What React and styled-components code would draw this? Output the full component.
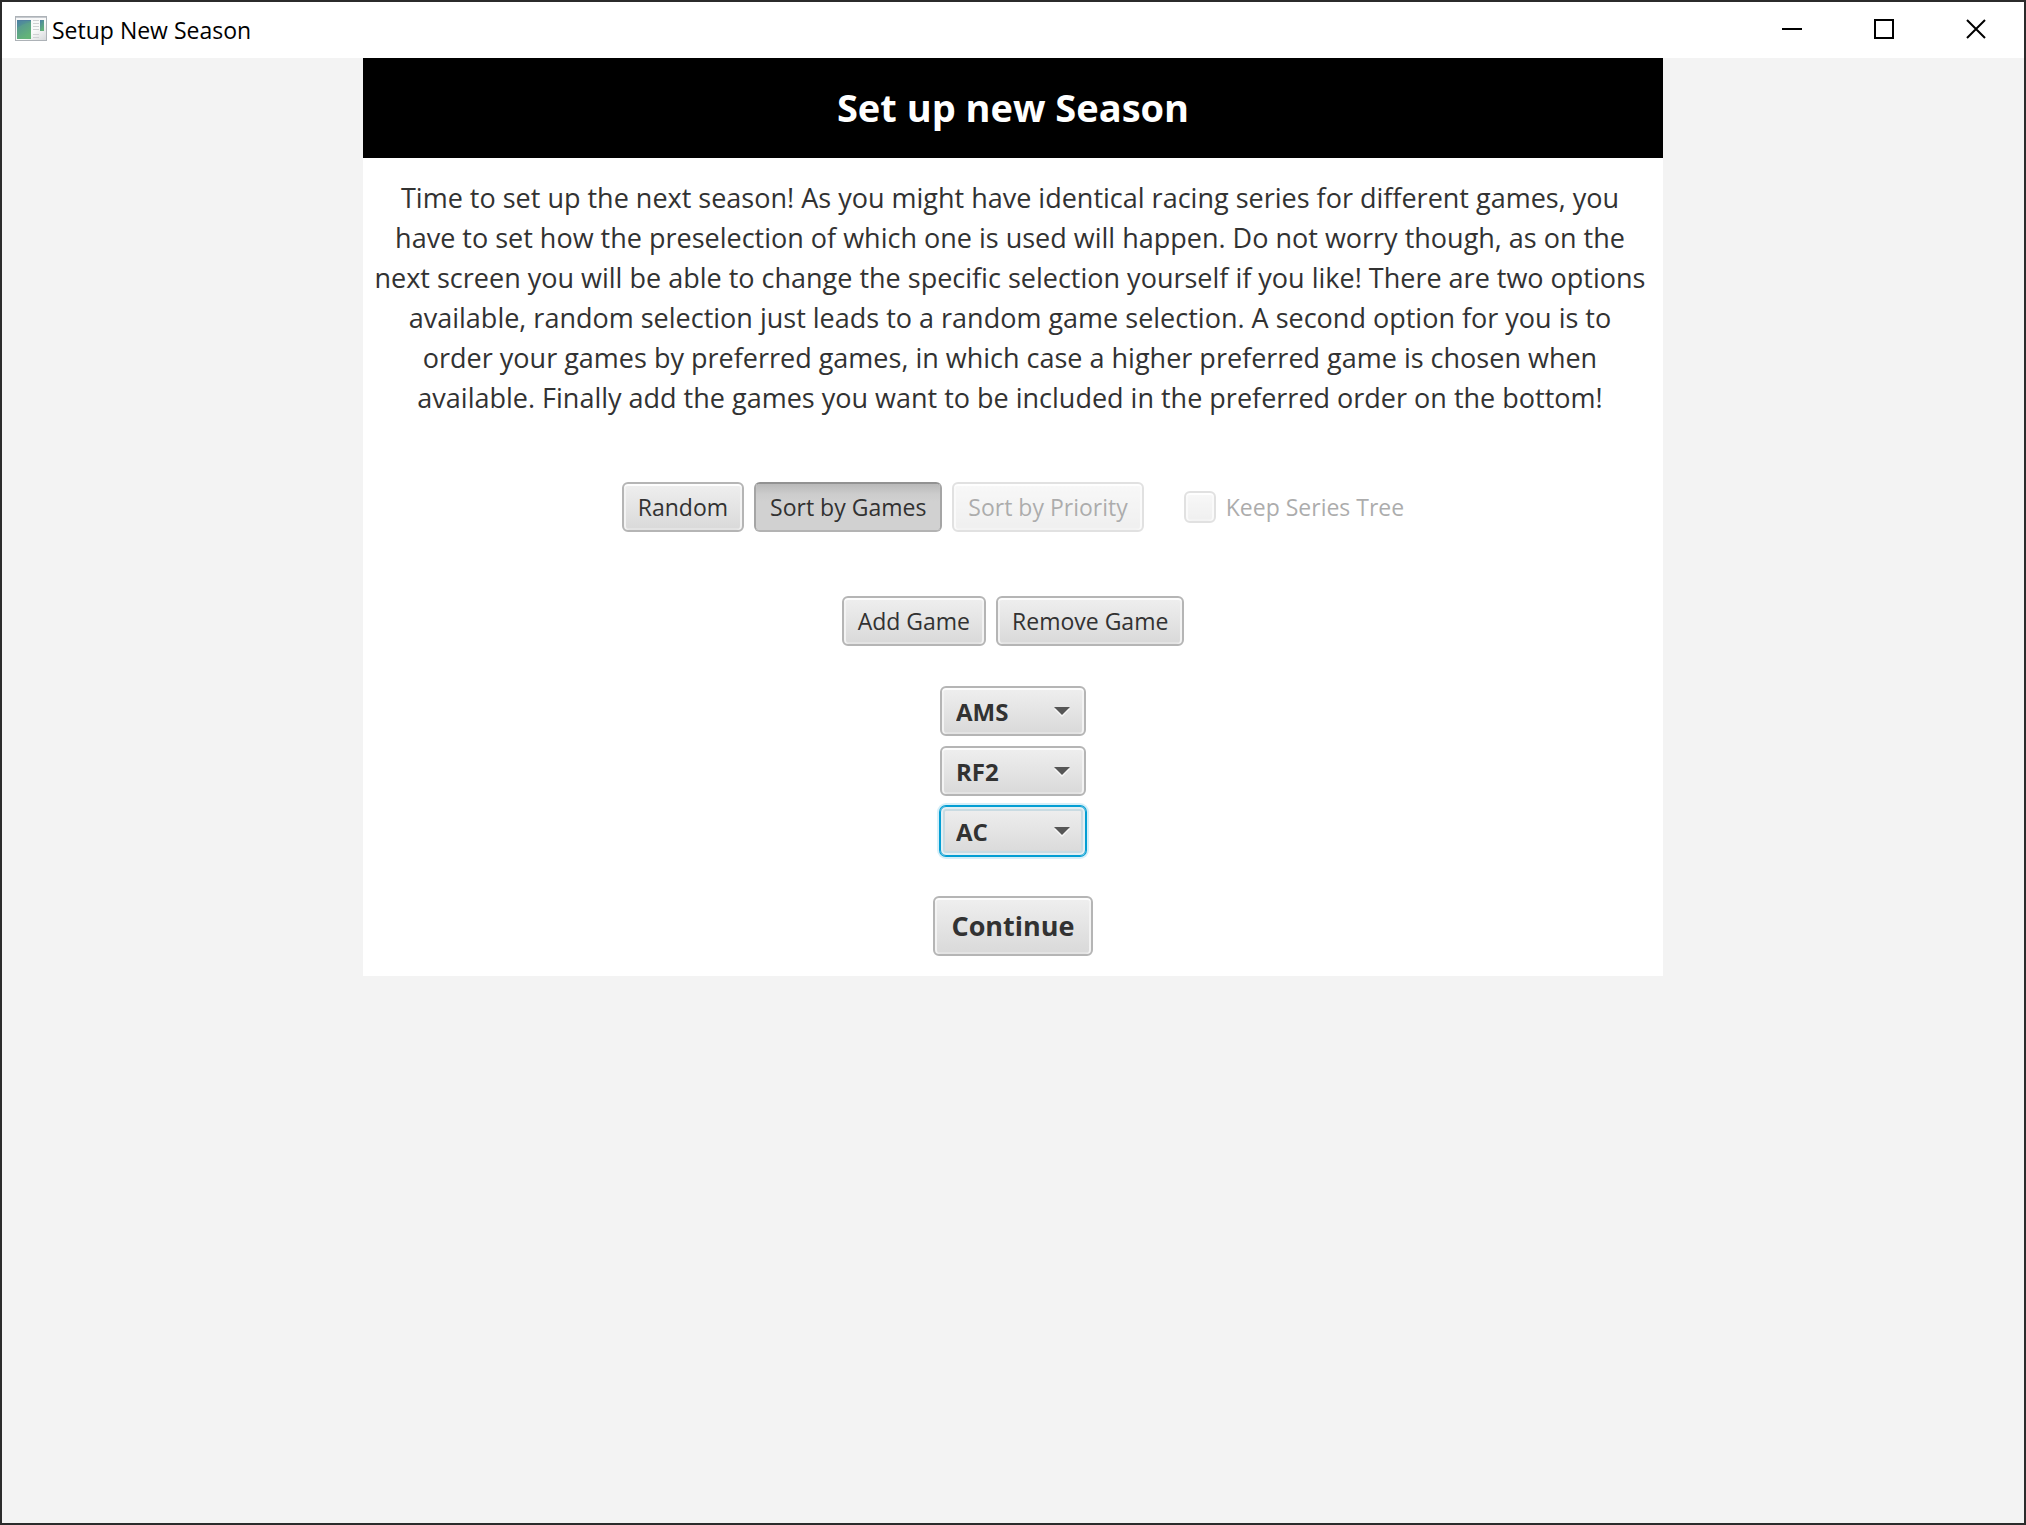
import React, { useState } from "react";
import styled, { createGlobalStyle, css } from "styled-components";

const GlobalStyle = createGlobalStyle`
  *, *::before, *::after { box-sizing: border-box; }
  body { margin: 0; }
  body, button, select, input { font-family: "Open Sans", "Noto Sans", sans-serif; }
`;

const Window = styled.div`
  display: flex;
  flex-direction: column;
  min-height: 100vh;
  border: 2px solid #2b2b2b;
  background: #f3f3f3;
  color: #323232;
`;

const TitleBar = styled.header`
  display: flex;
  align-items: center;
  justify-content: space-between;
  height: 56px;
  padding: 0 2px 0 13px;
  background: #fff;
  color: #000;
`;

const Caption = styled.div`
  display: flex;
  align-items: center;
  gap: 5px;
  font-size: 23px;
  line-height: 32px;
`;

const WindowControls = styled.div`
  display: flex;
`;

const ControlButton = styled.button`
  display: flex;
  align-items: center;
  justify-content: center;
  width: 92px;
  height: 56px;
  padding: 0;
  border: 0;
  background: transparent;
  color: #000;
`;

const Panel = styled.main`
  display: flex;
  flex-direction: column;
  align-items: center;
  align-self: center;
  width: 100%;
  max-width: 1300px;
  padding-bottom: 20px;
  background: #fff;
`;

const Heading = styled.h1`
  align-self: stretch;
  margin: 0;
  padding: 20px 20px 22px;
  background: #000;
  color: #fff;
  font-size: 38px;
  font-weight: 700;
  line-height: 58px;
  text-align: center;
`;

const Intro = styled.p`
  align-self: stretch;
  margin: 0;
  padding: 20px 16px 0 10px;
  font-size: 27px;
  line-height: 40px;
  text-align: center;
`;

const Row = styled.div`
  display: flex;
  align-items: center;
  gap: 10px;
  margin-top: 64px;
`;

const raised = css`
  border: 2px solid #b5b5b5;
  border-radius: 6px;
  background: linear-gradient(#efefef, #d9d9d9) padding-box;
  box-shadow: inset 0 2px #fdfdfd, inset 2px 0 #f3f3f3, inset -2px 0 #f3f3f3, inset 0 -2px #e3e3e3;
  color: #323232;
`;

const pressed = css`
  border-color: #929292 #a5a5a5 #b3b3b3;
  background: linear-gradient(#b9b9b9, #cccccc 10px, #d1d1d1 18px) padding-box;
  box-shadow: none;
`;

const Button = styled.button`
  ${raised}
  height: ${(p) => (p.$large ? 60 : 50)}px;
  padding: 0 ${(p) => (p.$large ? 16 : 14)}px;
  font-size: ${(p) => (p.$large ? 27 : 23)}px;
  font-weight: ${(p) => (p.$large ? 700 : 400)};
  line-height: 32px;
  ${(p) => p.$pressed && pressed}
  &:disabled { opacity: 0.4; }
`;

const CheckLabel = styled.label`
  display: flex;
  align-items: center;
  gap: 10px;
  margin-left: 30px;
  font-size: 23px;
  line-height: 32px;
  opacity: 0.4;
`;

const CheckBox = styled.input`
  ${raised}
  appearance: none;
  width: 32px;
  height: 32px;
  margin: 0;
`;

const GameList = styled.div`
  display: flex;
  flex-direction: column;
  gap: 10px;
  margin: 40px 0;
`;

const Picker = styled.div`
  display: grid;
  align-items: center;
  width: 146px;
  height: 50px;

  & > * { grid-area: 1 / 1; }
  & > svg { justify-self: end; margin-right: 16px; overflow: visible; pointer-events: none; }
`;

const Select = styled.select`
  ${raised}
  appearance: none;
  width: 100%;
  height: 50px;
  padding: 0 40px 0 14px;
  font-size: 24px;
  font-weight: 700;
  outline: none;
  ${(p) =>
    p.$active &&
    css`
      border-width: 1px;
      border-color: #039ed3;
      padding-left: 15px;
      box-shadow: 0 0 0 1px #039ed3, 0 0 0 3px #d6eff8, inset 0 0 0 2px #e3eff3, inset 0 0 0 4px #c9dbe2;
    `}
`;

function AppIcon() {
  return (
    <svg width="32" height="28" viewBox="0 0 32 28" aria-hidden="true">
      <defs>
        <linearGradient id="frame" x1="0" y1="0" x2="1" y2="1">
          <stop offset="0" stopColor="#f6f7f8" />
          <stop offset="0.6" stopColor="#fafafa" />
          <stop offset="1" stopColor="#d5d7d9" />
        </linearGradient>
        <linearGradient id="pane" x1="0" y1="0" x2="0.5" y2="1">
          <stop offset="0" stopColor="#4a7fa6" />
          <stop offset="1" stopColor="#62b277" />
        </linearGradient>
      </defs>
      <rect x="0.5" y="0.5" width="31" height="24" fill="url(#frame)" stroke="#adb2b7" />
      <path d="M1 1.5h30" stroke="#c5c9ce" />
      <rect x="2" y="4" width="14" height="19" fill="url(#pane)" />
      <path d="M2 4.5h14" stroke="#4d7f9c" />
      <path d="M2 12c4-3 8-5 14-6v17H2z" fill="#6cba7b" opacity="0.25" />
      <path d="M18 4.5h6M18 7.5h6M18 10.5h6M18 13.5h6M18 18.5h6M18 21.5h6" stroke="#cfd1d3" />
      <rect x="25" y="4" width="4" height="11" fill="url(#pane)" />
    </svg>
  );
}

function Arrow() {
  return (
    <svg width="16" height="8" viewBox="0 0 16 8" aria-hidden="true">
      <path d="M0 2h16l-8 8z" fill="#f6f6f6" />
      <path d="M0 0h16l-8 8z" fill="#565656" />
    </svg>
  );
}

const controls = [
  ["Minimize", "M0 10h20"],
  ["Maximize", "M1 1h18v18H1z"],
  ["Close", "M1 1l18 18M19 1L1 19"],
];

const games = ["AMS", "RF2", "AC"];

export default function App() {
  const [mode, setMode] = useState("games");
  const [order, setOrder] = useState(games);
  const [active, setActive] = useState(2);

  return (
    <>
      <GlobalStyle />
      <Window>
        <TitleBar>
          <Caption>
            <AppIcon />
            <span>Setup New Season</span>
          </Caption>
          <WindowControls>
            {controls.map(([name, d]) => (
              <ControlButton key={name} type="button" aria-label={name}>
                <svg width="20" height="22" viewBox="0 0 20 22" fill="none" stroke="currentColor" strokeWidth="2">
                  <path d={d} />
                </svg>
              </ControlButton>
            ))}
          </WindowControls>
        </TitleBar>
        <Panel>
          <Heading>Set up new Season</Heading>
          <Intro>
            Time to set up the next season! As you might have identical racing series for different games, you have to
            set how the preselection of which one is used will happen. Do not worry though, as on the next screen you
            will be able to change the specific selection yourself if you like! There are two options available, random
            selection just leads to a random game selection. A second option for you is to order your games by preferred
            games, in which case a higher preferred game is chosen when available. Finally add the games you want to be
            included in the preferred order on the bottom!
          </Intro>
          <Row>
            <Button type="button" $pressed={mode === "random"} onClick={() => setMode("random")}>Random</Button>
            <Button type="button" $pressed={mode === "games"} onClick={() => setMode("games")}>Sort by Games</Button>
            <Button type="button" disabled>Sort by Priority</Button>
            <CheckLabel>
              <CheckBox type="checkbox" disabled />
              Keep Series Tree
            </CheckLabel>
          </Row>
          <Row>
            <Button type="button">Add Game</Button>
            <Button type="button">Remove Game</Button>
          </Row>
          <GameList>
            {order.map((game, i) => (
              <Picker key={i}>
                <Select
                  aria-label={`Game ${i + 1}`}
                  value={game}
                  $active={i === active}
                  onFocus={() => setActive(i)}
                  onChange={(e) => setOrder(order.map((g, j) => (j === i ? e.target.value : g)))}
                >
                  {games.map((g) => (
                    <option key={g}>{g}</option>
                  ))}
                </Select>
                <Arrow />
              </Picker>
            ))}
          </GameList>
          <Button type="button" $large>Continue</Button>
        </Panel>
      </Window>
    </>
  );
}
